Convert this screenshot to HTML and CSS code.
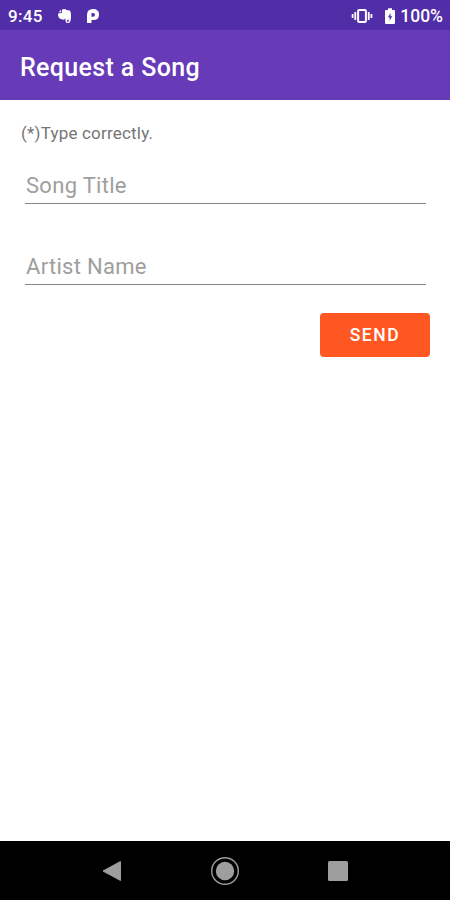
FILE: index.html
```html
<!DOCTYPE html>
<html lang="en">
<head>
    <meta charset="UTF-8">
    <meta name="viewport" content="width=device-width, initial-scale=1.0">
    <title>Request a Song</title>
    <link rel="stylesheet" href="styles.css">
</head>
<body>
    <!-- Status bar -->
    <div class="status-bar">
        <span class="time">9:45</span>
        <svg class="icon-elephant" width="16" height="16" viewBox="0 0 16 16">
            <path fill="#fff" d="M5 1.500 Q8 .2 9.500 2 L12.500 2.500 Q14 3 14 8 Q14 15 11.500 15 Q8.500 15.200 8.500 12.500 L8.300 10.300 Q7.500 12 5.500 11.600 Q1.500 11 1 7 Q.8 5.500 2 5.200 L5 5 Z"/>
            <path fill="#fff" d="M4.200 1.800 L4.200 4.300 L1.500 4.300 Z"/>
            <path fill="none" stroke="#512da8" stroke-width="1" d="M12 12.200 H10.500 V13.500 H11.600"/>
        </svg>
        <svg class="icon-p" width="16" height="16" viewBox="0 0 16 16">
            <path fill="#fff" fill-rule="evenodd" d="M2 7 Q2 1 8 1 Q14 1 14 6.500 Q14 12 8.500 12 L6.500 12 L6.500 15 L2 15 Z M6.500 5 L6.500 8.700 H8 Q10 8.700 10 6.800 Q10 5 8 5 Z"/>
        </svg>
        <div class="status-right">
            <svg width="22" height="16" viewBox="0 0 22 16">
                <rect x="7.100" y="2" width="7.800" height="12" rx="1" fill="none" stroke="#fff" stroke-width="2"/>
                <path fill="none" stroke="#fff" stroke-width="1.800" d="M4.300 4 V12 M17.700 4 V12 M1.600 6 V10 M20.400 6 V10"/>
            </svg>
            <svg class="icon-battery" width="12" height="16" viewBox="0 0 12 16">
                <path fill="#fff" d="M4 .2 H8 V2 H10 Q11 2 11 3 V15 Q11 16 10 16 H2 Q1 16 1 15 V3 Q1 2 2 2 H4 Z"/>
                <path fill="#512da8" d="M6.500 5 L4 9.300 H5.600 V12.800 L8.200 8.200 H6.500 Z"/>
            </svg>
            <span class="battery">100%</span>
        </div>
    </div>

    <header class="app-bar">
        <h1>Request a Song</h1>
    </header>

    <main class="content">
        <p class="hint">(*)Type correctly.</p>
        <form class="song-form">
            <input type="text" placeholder="Song Title" aria-label="Song Title">
            <input type="text" placeholder="Artist Name" aria-label="Artist Name">
            <button type="button">SEND</button>
        </form>
    </main>

    <!-- Navigation buttons -->
    <nav class="nav-bar">
        <svg width="30" height="30" viewBox="0 0 30 30">
            <path fill="#9e9e9e" stroke="#9e9e9e" stroke-linejoin="round" d="M6 15 L23.500 5.500 V24.500 Z"/>
        </svg>
        <svg width="30" height="30" viewBox="0 0 30 30">
            <circle cx="15" cy="15" r="13.300" fill="none" stroke="#9e9e9e" stroke-width="1.400"/>
            <circle cx="15" cy="15" r="9.200" fill="#9e9e9e"/>
        </svg>
        <svg width="30" height="30" viewBox="0 0 30 30">
            <rect x="5" y="5" width="20" height="20" rx="1.500" fill="#9e9e9e"/>
        </svg>
    </nav>
</body>
</html>
```
FILE: styles.css
```css
* {
    box-sizing: border-box;
}

body {
    margin: 0;
    height: 900px;
    display: flex;
    flex-direction: column;
    overflow: hidden;
    font-family: Roboto, sans-serif;
    background-color: #fff;
}

svg {
    display: block;
}

.status-bar {
    height: 30px;
    display: flex;
    align-items: center;
    padding: 2px 7px 0 8px;
    background-color: #512da8;
    color: #fff;
    font-size: 17px;
    font-weight: 500;
}

.time {
    letter-spacing: 0.3px;
}

.icon-elephant {
    margin-left: 14px;
}

.icon-p {
    margin-left: 12px;
}

.status-right {
    display: flex;
    align-items: center;
    margin-left: auto;
}

.icon-battery {
    margin: 0 4px 0 11px;
}

.battery {
    font-size: 17.5px;
}

.app-bar {
    height: 70px;
    display: flex;
    align-items: center;
    padding: 4px 20px 0;
    background-color: #673ab7;
    color: #fff;
}

.app-bar h1 {
    margin: 0;
    font-size: 25px;
    font-weight: 500;
    letter-spacing: 0.35px;
}

.content {
    flex: 1;
    padding: 23px 20px 0;
}

.hint {
    margin: 0;
    font-size: 17px;
    line-height: 20px;
    letter-spacing: 0.2px;
    text-indent: 1px;
    color: #757575;
}

.song-form {
    display: flex;
    flex-direction: column;
    padding: 20px 0 0 5px;
}

.song-form input {
    width: 401px;
    height: 41px;
    margin-bottom: 40px;
    padding: 4px 0 0;
    border: none;
    border-bottom: 1px solid #858585;
    outline: none;
    font-family: inherit;
    font-size: 22px;
    letter-spacing: 0.3px;
    text-indent: 1px;
}

.song-form input::placeholder {
    color: #9e9e9e;
}

.song-form input + input {
    margin-bottom: 28px;
}

.song-form button {
    align-self: flex-end;
    width: 110px;
    height: 44px;
    border: none;
    border-radius: 4px;
    background-color: #ff5722;
    color: #fff;
    font-family: inherit;
    font-size: 17.5px;
    font-weight: 500;
    letter-spacing: 1.6px;
}

.nav-bar {
    height: 59px;
    display: flex;
    align-items: center;
    justify-content: center;
    gap: 83px;
    background-color: #000;
}
```
